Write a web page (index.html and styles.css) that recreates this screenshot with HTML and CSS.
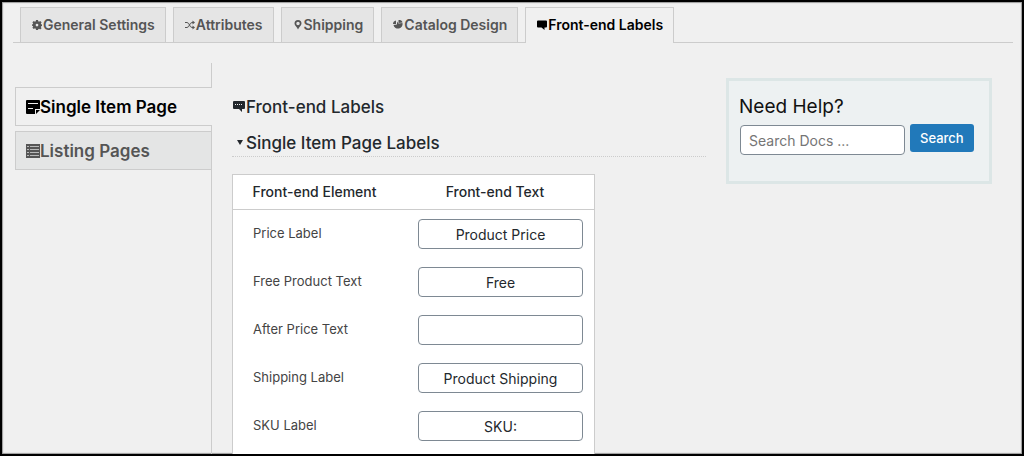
FILE: index.html
```html
<!DOCTYPE html>
<html lang="en">
<head>
<meta charset="utf-8">
<title>Front-end Labels</title>
<link rel="stylesheet" href="styles.css">
</head>
<body>
<nav class="tabs" aria-label="Settings">
  <a class="tab" href="#general"><svg class="icon" viewBox="0 0 20 20"><path fill-rule="evenodd" d="M8 0h4l.5 2.600 1.600.7 2.200-1.500 2.900 2.900-1.500 2.200.7 1.600 1.600.5v3l-1.600.5-.7 1.600 1.500 2.200-2.900 2.900-2.200-1.500-1.600.7L12 20H8l-.5-2.600-1.600-.7-2.200 1.500-2.900-2.900 1.500-2.200-.7-1.600L0 12V9l1.600-.5.7-1.600L.8 4.700l2.900-2.900 2.200 1.500 1.600-.7zM10 7.500a2.700 2.700 0 1 0 0 5.400 2.700 2.700 0 0 0 0-5.400z"/></svg>General Settings</a>
  <a class="tab" href="#attributes"><svg class="icon" viewBox="0 0 20 20"><path class="line" d="M0 5h4c5 0 5 10 10 10h3M0 15h4c5 0 5-10 10-10h3"/><path d="M15 1l5 4-5 4zM15 11l5 4-5 4z"/></svg>Attributes</a>
  <a class="tab" href="#shipping"><svg class="icon" viewBox="0 0 20 20"><path fill-rule="evenodd" d="M10 0a7 7 0 0 1 7 7C17 11 12 14 10 19 8 14 3 11 3 7A7 7 0 0 1 10 0zm0 3.400a3.500 3.500 0 1 0 0 7 3.500 3.500 0 0 0 0-7z"/></svg>Shipping</a>
  <a class="tab" href="#design"><svg class="icon" viewBox="0 0 20 20"><path d="M8 9V3l3 4 8-1a9 9 0 1 1-18 4z"/><path d="M11 6V0c4-.5 7 1 8 5z"/><path d="M0 8c0-4 2-6 6-7v7z"/></svg>Catalog Design</a>
  <a class="tab tab-active" href="#labels" aria-current="page"><svg class="icon" viewBox="0 0 20 20"><path d="M2 1h16q2 0 2 2v10q0 2-2 2h-3v5l-6-5H2q-2 0-2-2V3q0-2 2-2z"/></svg>Front-end Labels</a>
</nav>
<div class="layout">
  <nav class="side" aria-label="Labels">
    <a class="side-tab side-active" href="#single" aria-current="page"><svg class="icon-lg" viewBox="0 0 14 14"><path fill-rule="evenodd" d="M1 0h12q1 0 1 1v8H9v5H1q-1 0-1-1V1q0-1 1-1zm1 3v1h10V3zm0 5v1h5V8z"/><path d="M10 10h4l-4 4z"/></svg>Single Item Page</a>
    <a class="side-tab" href="#listing"><svg class="icon-lg" viewBox="0 0 14 14"><path class="shade" d="M1 1h12v12H1z"/><path fill-rule="evenodd" d="M0 0h14v14H0zm1 2v1h2V2zm3 0v1h9V2zM1 5v1h2V5zm3 0v1h9V5zM1 8v1h2V8zm3 0v1h9V8zm-3 3v1h2v-1zm3 0v1h9v-1z"/></svg>Listing Pages</a>
  </nav>
  <main class="content">
    <h2 class="heading"><svg class="icon-lg" viewBox="0 0 14 14"><path fill-rule="evenodd" d="M2 1h10q1 0 1 1v6q0 1-1 1h-2v3L7 9H2Q1 9 1 8V2q0-1 1-1zm1 3v1h1V4zm2 0v1h1V4zm2 0v1h1V4zm2 0v1h1V4z"/></svg>Front-end Labels</h2>
    <h3 class="subheading"><svg class="icon-lg" viewBox="0 0 14 14"><path d="M5 4h6l-3 5z"/></svg>Single Item Page Labels</h3>
    <div class="panel">
      <table class="labels">
        <thead><tr><th scope="col">Front-end Element</th><th scope="col">Front-end Text</th></tr></thead>
        <tbody>
          <tr><td><label for="price">Price Label</label></td><td><input class="field" id="price" type="text" value="Product Price"></td></tr>
          <tr><td><label for="free">Free Product Text</label></td><td><input class="field" id="free" type="text" value="Free"></td></tr>
          <tr><td><label for="after">After Price Text</label></td><td><input class="field" id="after" type="text"></td></tr>
          <tr><td><label for="ship">Shipping Label</label></td><td><input class="field" id="ship" type="text" value="Product Shipping"></td></tr>
          <tr><td><label for="sku">SKU Label</label></td><td><input class="field" id="sku" type="text" value="SKU:"></td></tr>
        </tbody>
      </table>
    </div>
  </main>
  <aside class="help">
    <label class="help-title" for="docs">Need Help?</label>
    <form class="search">
      <input class="field docs" id="docs" type="text" placeholder="Search Docs ...">
      <button class="button" type="button">Search</button>
    </form>
  </aside>
</div>
</body>
</html>
```
FILE: styles.css
```css
* {
  box-sizing: border-box;
}

body {
  display: flex;
  flex-direction: column;
  min-height: 100vh;
  margin: 0;
  border: 2px solid #000;
  box-shadow: inset 0 0 1px 1px #999;
  background: #f0f0f0;
  color: #23282d;
  font: 14px/20px Inter, "Liberation Sans", sans-serif;
}

.tabs {
  display: flex;
  gap: 7px;
  margin: 5px 9px 0 11px;
  padding-left: 7px;
  border-bottom: 1px solid #ccc;
}

.tab {
  display: flex;
  align-items: center;
  height: 35px;
  padding: 0 10px;
  border: 1px solid #ccc;
  border-bottom: 0;
  background: #e5e5e5;
  color: #555;
  font-weight: 600;
  text-decoration: none;
}

.tab-active {
  height: 36px;
  margin-bottom: -1px;
  padding-bottom: 2px;
  background: #f0f0f0;
  color: #000;
}

.icon {
  flex: none;
  width: 12px;
  height: 10px;
  fill: currentColor;
}

.line {
  fill: none;
  stroke: currentColor;
  stroke-width: 2;
}

.icon-lg {
  flex: none;
  width: 14px;
  height: 14px;
  fill: currentColor;
}

.shade {
  opacity: 0.3;
}

.layout {
  display: grid;
  flex: 1;
  grid-template-columns: 197px 1fr 266px;
  gap: 20px;
  margin: 20px 30px 0 13px;
}

.side {
  display: flex;
  flex-direction: column;
  gap: 5px;
  padding-top: 24px;
  border-right: 1px solid #ccc;
}

.side-tab {
  display: flex;
  align-items: center;
  height: 39px;
  padding: 0 10px;
  border: 1px solid #ccc;
  border-right: 0;
  background: #e4e5e5;
  color: #555;
  font-size: 17px;
  font-weight: 600;
  text-decoration: none;
}

.side-active {
  margin-right: -1px;
  background: #f0f0f0;
  color: #000;
}

.content {
  display: flex;
  flex-direction: column;
  padding-top: 32px;
}

.heading,
.subheading {
  display: flex;
  align-items: center;
  margin: 0;
  font-size: 17px;
  font-weight: 500;
  line-height: 24px;
}

.subheading {
  margin: 12px 0 17px;
  padding-bottom: 1px;
  border-bottom: 1px dotted #ccc;
}

.panel {
  flex: 1;
  width: 363px;
  border: 1px solid #ccc;
  border-bottom: 0;
  background: #fff;
}

.labels {
  width: 100%;
  border-collapse: separate;
  border-spacing: 0;
}

.labels th {
  height: 35px;
  padding: 0 32px 0 10px;
  border-bottom: 1px solid #ccc;
  font-weight: 500;
}

.labels td {
  height: 48px;
  padding: 9px 11px 9px 0;
}

.labels td:first-child {
  width: 185px;
  padding: 0 0 2px 20px;
  color: #444;
  font-size: 13px;
}

.field {
  display: block;
  width: 165px;
  height: 30px;
  padding: 0 8px;
  border: 1px solid #7e8993;
  border-radius: 4px;
  background: #fff;
  color: #23282d;
  font: inherit;
  text-align: center;
}

.docs {
  margin-top: 1px;
  text-align: left;
}

.docs::placeholder {
  color: #757575;
}

.help {
  align-self: start;
  min-height: 106px;
  margin-top: 15px;
  padding: 14px 10px;
  border: 3px solid #dce6e6;
  background: #edf1f2;
}

.help-title {
  display: block;
  margin-bottom: 5px;
  color: #111;
  font-size: 19px;
  line-height: 24px;
}

.search {
  display: flex;
  align-items: flex-start;
  gap: 5px;
  margin-left: 1px;
}

.button {
  height: 28px;
  padding: 0 10px;
  border: 0;
  border-radius: 3px;
  background: #2179ba;
  color: #fff;
  font: 500 13px Inter, "Liberation Sans", sans-serif;
}
```
